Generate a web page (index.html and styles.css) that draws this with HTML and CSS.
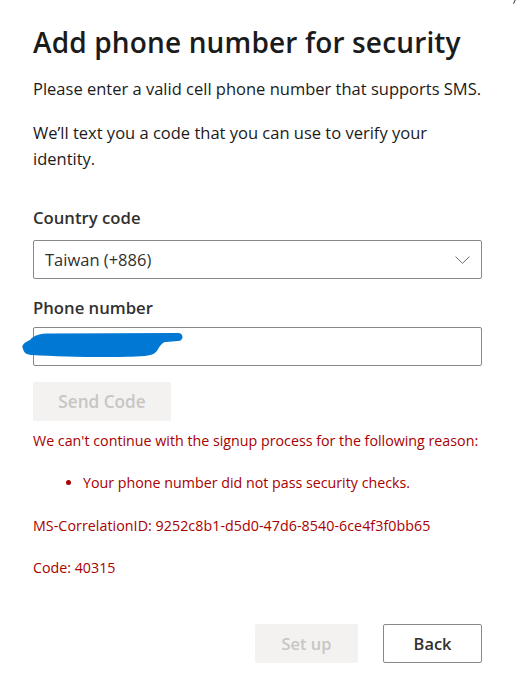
FILE: index.html
```html
<!DOCTYPE html>
<html>
<head>
<meta charset="utf-8">
<link rel="stylesheet" href="styles.css">
</head>
<body>
<div class="corner"></div>
<main class="dialog">
  <h1 class="title">Add phone number for security</h1>
  <p class="text">Please enter a valid cell phone number that supports SMS.</p>
  <p class="text text-para">We’ll text you a code that you can use to verify your identity.</p>

  <label class="label label-country">Country code</label>
  <div class="select">
    <span>Taiwan (+886)</span>
    <svg class="chevron" width="15" height="8" viewBox="0 0 15 8"><path d="M0.5 0.6 L7.5 7.3 L14.5 0.6" fill="none" stroke="#6e6c6a" stroke-width="1"/></svg>
  </div>

  <label class="label label-phone">Phone number</label>
  <div class="input-wrap">
    <div class="input"></div>
    <svg class="scribble" width="166" height="28" viewBox="0 0 166 28"><path d="M3 18 C 1 14, 4 12, 10 9 C 14 4, 20 2.5, 30 2.5 L 158 2 C 164 2, 164 10, 158 10 L 146 11 C 143 11, 142 13, 140 15 L 138 18 C 136 22, 133 24, 125 25 C 95 27, 45 26, 12 24 C 5 23.5, 4 21, 3 18 Z" fill="#0078d4"/></svg>
  </div>

  <button class="btn btn-disabled send">Send Code</button>

  <div class="error">
    <p>We can't continue with the signup process for the following reason:</p>
    <ul class="reasons"><li>Your phone number did not pass security checks.</li></ul>
    <p class="err-id">MS-CorrelationID: 9252c8b1-d5d0-47d6-8540-6ce4f3f0bb65</p>
    <p class="err-code">Code: 40315</p>
  </div>

  <div class="actions">
    <button class="btn btn-disabled setup">Set up</button>
    <button class="btn btn-outline back">Back</button>
  </div>
</main>
</body>
</html>
```
FILE: styles.css
```css
html, body {
  margin: 0;
  padding: 0;
  background: #ffffff;
}
body {
  font-family: "Open Sans", "Noto Sans", sans-serif;
  color: #1b1b1b;
  position: relative;
  width: 523px;
  height: 697px;
  overflow: hidden;
}
.corner {
  position: absolute;
  top: -1px;
  left: 514px;
  width: 1px;
  height: 5px;
  background: #444;
  transform: rotate(25deg);
}
.dialog {
  width: 449px;
  padding: 24px 0 0 33px;
  display: flex;
  flex-direction: column;
  align-items: flex-start;
}
.title {
  margin: 0;
  font-size: 28px;
  font-weight: 600;
  line-height: 36px;
  letter-spacing: 0.15px;
  color: #1b1b1b;
}
.text {
  margin: 18px 0 0;
  font-size: 16.5px;
  line-height: 22px;
  color: #1b1b1b;
}
.text-para {
  margin-top: 20px;
  line-height: 26px;
  width: 449px;
}
.label {
  display: block;
  font-size: 16.7px;
  font-weight: 600;
  line-height: 22px;
  color: #323130;
}
.label-country {
  margin-top: 35px;
  margin-bottom: 11px;
}
.label-phone {
  margin-top: 18px;
  margin-bottom: 8px;
}
.select {
  box-sizing: border-box;
  width: 449px;
  height: 39px;
  border: 1px solid #8a8886;
  border-radius: 2px;
  display: flex;
  align-items: center;
  justify-content: space-between;
  padding: 0 11px 0 11px;
  font-size: 16.5px;
  color: #323130;
}
.chevron { display: block; }
.input-wrap {
  position: relative;
  width: 449px;
}
.input {
  box-sizing: border-box;
  width: 449px;
  height: 39px;
  border: 1px solid #8a8886;
  border-radius: 2px;
}
.scribble {
  position: absolute;
  left: -13px;
  top: 4px;
}
.btn {
  font-family: inherit;
  font-weight: 600;
  height: 39px;
  border-radius: 2px;
  padding: 0;
}
.btn-disabled {
  background: #f3f2f1;
  border: none;
  color: #c8c6c4;
}
.btn-outline {
  background: #ffffff;
  border: 1px solid #8a8886;
  color: #323130;
}
.send {
  margin-top: 16px;
  width: 138px;
  font-size: 17.2px;
}
.error {
  color: #a80000;
  font-size: 14.25px;
  line-height: 20px;
  margin-top: 9.5px;
}
.error p { margin: 0; }
.reasons {
  margin: 22px 0 0;
  padding-left: 50px;
}
.reasons li { line-height: 20px; }
.error .err-id { margin-top: 23px; letter-spacing: 0.05px; }
.error .err-code { margin-top: 22px; }
.actions {
  align-self: stretch;
  display: flex;
  justify-content: flex-end;
  gap: 25px;
  margin-top: 46.5px;
}
.setup { width: 103px; font-size: 16.4px; }
.back { width: 99px; font-size: 16.4px; }
```
